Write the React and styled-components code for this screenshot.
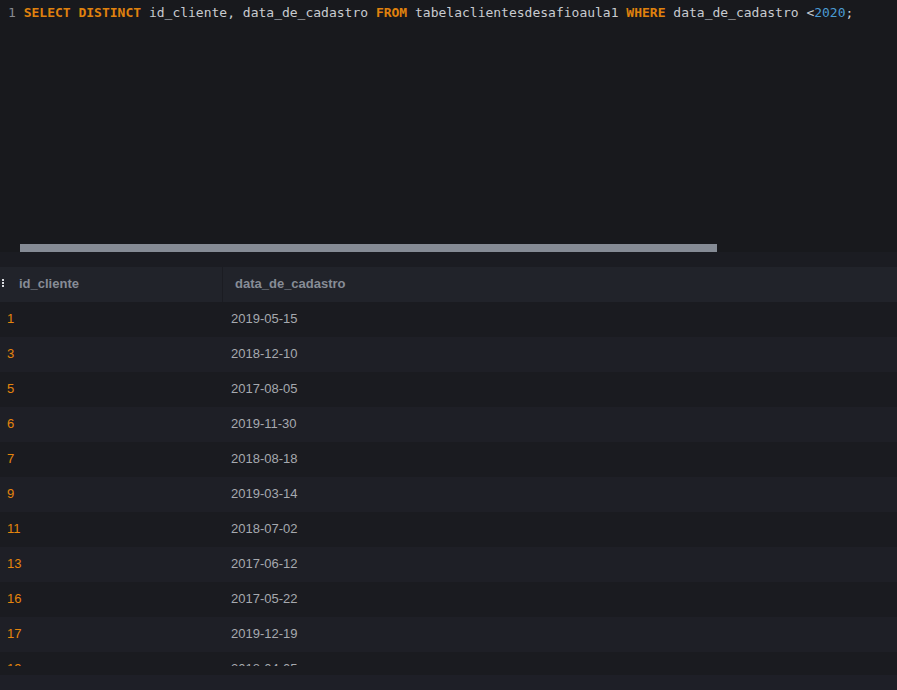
import React from 'react'
import styled, { createGlobalStyle } from 'styled-components'

const GlobalStyle = createGlobalStyle`
  html, body {
    margin: 0;
    padding: 0;
    background: #18191d;
  }
`

const rows = [
  ['1', '2019-05-15'],
  ['3', '2018-12-10'],
  ['5', '2017-08-05'],
  ['6', '2019-11-30'],
  ['7', '2018-08-18'],
  ['9', '2019-03-14'],
  ['11', '2018-07-02'],
  ['13', '2017-06-12'],
  ['16', '2017-05-22'],
  ['17', '2019-12-19'],
  ['19', '2018-04-05']
]

const Page = styled.div`
  width: 897px;
  height: 690px;
  display: flex;
  flex-direction: column;
  background: #18191d;
  overflow: hidden;
`

const Editor = styled.div`
  height: 252px;
  display: flex;
  flex-direction: column;
  justify-content: space-between;
  background: #18191d;
`

const CodeLine = styled.div`
  padding: 4px 0 0 8px;
  font-family: 'DejaVu Sans Mono', monospace;
  font-size: 13px;
  line-height: 18px;
  color: #c8cbd0;
  white-space: pre;
`

const LineNo = styled.span`
  color: #878a90;
`

const Kw = styled.span`
  color: #e0820d;
  font-weight: bold;
`

const Num = styled.span`
  color: #4b9bd3;
`

const ScrollThumb = styled.div`
  margin-left: 20px;
  width: 697px;
  height: 8px;
  background: #858b95;
`

const Gap = styled.div`
  height: 15px;
  background: #1b1c22;
`

const Table = styled.div`
  height: 399px;
  overflow: hidden;
  font-family: 'Liberation Sans', Arial, sans-serif;
  font-size: 13px;
`

const Row = styled.div`
  display: grid;
  grid-template-columns: 223px 1fr;
  height: 35px;
  box-sizing: border-box;
  padding-bottom: 2px;
  align-items: center;
  background: ${p => (p.$odd ? '#1a1b20' : '#1e1f26')};
`

const HeaderRow = styled(Row)`
  background: #21232a;
  align-items: stretch;
  padding-bottom: 0;
`

const HeadCell = styled.div`
  display: flex;
  align-items: center;
  padding-left: ${p => p.$pad}px;
  padding-bottom: 2px;
  color: #878c96;
  font-weight: bold;
  border-right: ${p => (p.$divider ? '1px solid #1b1c22' : 'none')};
`

const Handle = styled.svg`
  width: 19px;
  height: 10px;
  flex: none;
`

const IdCell = styled.div`
  padding-left: 7px;
  color: #e5850d;
`

const DateCell = styled.div`
  padding-left: 8px;
  color: #a6a9af;
`

const BottomStrip = styled.div`
  height: 9px;
  background: #1a1b20;
`

const Footer = styled.div`
  flex: 1;
  background: #1e1f27;
`

export default function App() {
  return (
    <Page>
      <GlobalStyle />
      <Editor>
        <CodeLine>
          <LineNo>1 </LineNo>
          <Kw>SELECT</Kw> <Kw>DISTINCT</Kw> id_cliente, data_de_cadastro <Kw>FROM</Kw> tabelaclientesdesafioaula1 <Kw>WHERE</Kw> data_de_cadastro &lt;<Num>2020</Num>;
        </CodeLine>
        <ScrollThumb />
      </Editor>
      <Gap />
      <Table>
        <HeaderRow>
          <HeadCell $pad={0} $divider>
            <Handle viewBox="0 0 19 10">
              <rect x="2" y="0" width="2" height="2" fill="#d8dade" />
              <rect x="2" y="3" width="2" height="2" fill="#d8dade" />
              <rect x="2" y="6" width="2" height="2" fill="#d8dade" />
            </Handle>
            id_cliente
          </HeadCell>
          <HeadCell $pad={12}>data_de_cadastro</HeadCell>
        </HeaderRow>
        {rows.map(([id, date], i) => (
          <Row key={id} $odd={i % 2 === 0}>
            <IdCell>{id}</IdCell>
            <DateCell>{date}</DateCell>
          </Row>
        ))}
      </Table>
      <BottomStrip />
      <Footer />
    </Page>
  )
}
